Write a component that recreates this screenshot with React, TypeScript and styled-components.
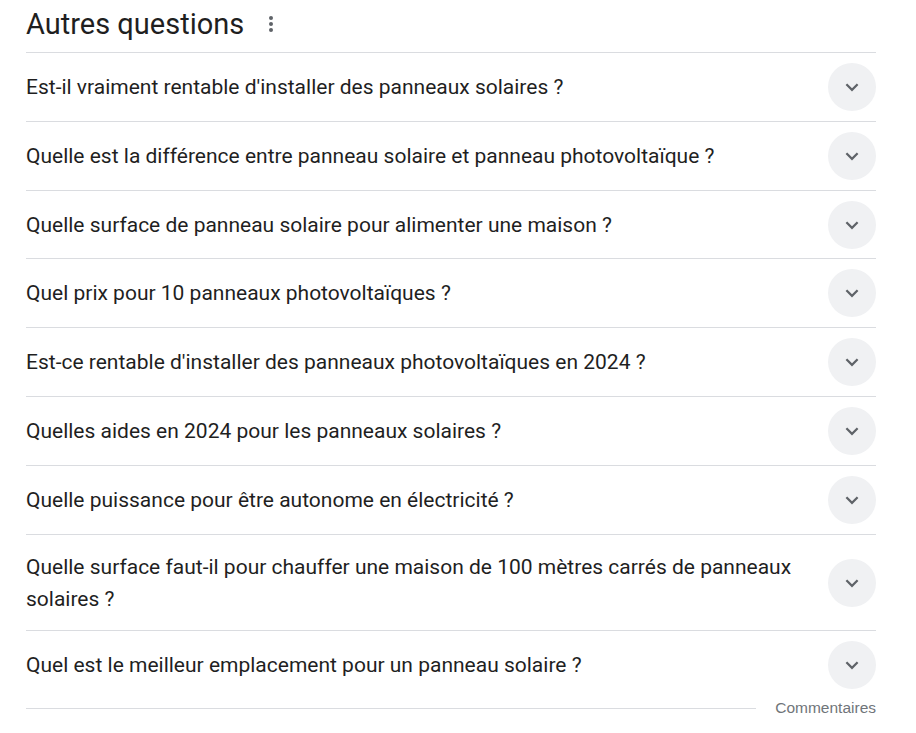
import React from 'react';
import styled, { createGlobalStyle } from 'styled-components';

const GlobalStyle = createGlobalStyle`
  body {
    margin: 0;
    background: #fff;
    font-family: Roboto, "Noto Sans", Arial, sans-serif;
  }
`;

const Page = styled.div`
  width: 850px;
  margin: 0 26px;
`;

const Header = styled.div`
  display: flex;
  align-items: center;
  height: 53px;
  border-bottom: 1px solid #dadce0;
  box-sizing: border-box;
`;

const Title = styled.h2`
  margin: 0;
  font-size: 29px;
  font-weight: 400;
  color: #1f1f1f;
  line-height: 36px;
  padding-bottom: 4px;
`;

const MenuButton = styled.span`
  display: flex;
  align-items: center;
  justify-content: center;
  width: 24px;
  height: 24px;
  margin-left: 15px;
  margin-bottom: 4px;
`;

const Row = styled.div<{ $last?: boolean }>`
  display: flex;
  align-items: center;
  gap: 20px;
  padding: 10px 0 9.8px;
  border-bottom: ${(p) => (p.$last ? 'none' : '1px solid #dadce0')};
`;

const Question = styled.div`
  flex: 1;
  font-size: 21px;
  line-height: 32px;
  padding: 6px 0;
  color: #1f1f1f;
`;

const Toggle = styled.div`
  flex: none;
  width: 48px;
  height: 48px;
  border-radius: 50%;
  background: #f0f1f3;
  display: flex;
  align-items: center;
  justify-content: center;
`;

const Footer = styled.div`
  display: flex;
  align-items: center;
`;

const FooterLine = styled.div`
  flex: 1;
  border-top: 1px solid #dadce0;
`;

const Feedback = styled.span`
  margin-left: 19px;
  font-family: "Liberation Sans", Arial, sans-serif;
  font-size: 15.5px;
  line-height: 18px;
  color: #70757a;
`;

const questions = [
  "Est-il vraiment rentable d'installer des panneaux solaires ?",
  'Quelle est la différence entre panneau solaire et panneau photovoltaïque ?',
  'Quelle surface de panneau solaire pour alimenter une maison ?',
  'Quel prix pour 10 panneaux photovoltaïques ?',
  "Est-ce rentable d'installer des panneaux photovoltaïques en 2024 ?",
  'Quelles aides en 2024 pour les panneaux solaires ?',
  'Quelle puissance pour être autonome en électricité ?',
  'Quelle surface faut-il pour chauffer une maison de 100 mètres carrés de panneaux solaires ?',
  'Quel est le meilleur emplacement pour un panneau solaire ?',
];

const Chevron = () => (
  <svg width="24" height="24" viewBox="0 0 24 24">
    <path d="M7.2 8.4 12 13.2l4.8-4.8L18.4 10 12 16.4 5.6 10z" fill="#5f6368" />
  </svg>
);

const Dots = () => (
  <svg width="24" height="24" viewBox="0 0 24 24">
    <circle cx="12" cy="6" r="2" fill="#5f6368" />
    <circle cx="12" cy="12" r="2" fill="#5f6368" />
    <circle cx="12" cy="18" r="2" fill="#5f6368" />
  </svg>
);

export default function App() {
  return (
    <>
      <GlobalStyle />
      <Page>
        <Header>
          <Title>Autres questions</Title>
          <MenuButton><Dots /></MenuButton>
        </Header>
        {questions.map((q, i) => (
          <Row key={q} $last={i === questions.length - 1}>
            <Question>{q}</Question>
            <Toggle><Chevron /></Toggle>
          </Row>
        ))}
        <Footer>
          <FooterLine />
          <Feedback>Commentaires</Feedback>
        </Footer>
      </Page>
    </>
  );
}
